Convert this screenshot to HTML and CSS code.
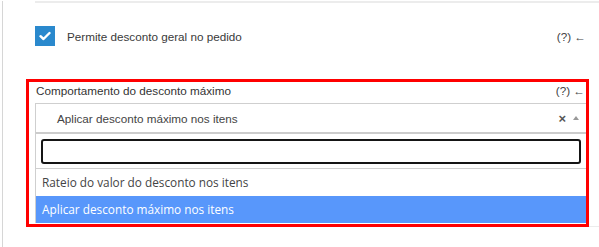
FILE: index.html
```html
<!DOCTYPE html>
<html lang="pt">
<head>
<meta charset="utf-8">
<link rel="stylesheet" href="styles.css">
</head>
<body>
<div class="page">
  <div class="content">
    <div class="check-row">
      <span class="checkbox">
        <svg width="12" height="10" viewBox="0 0 12 10"><path d="M1.5 5.2 L4.5 8 L10.5 2" fill="none" stroke="#fff" stroke-width="2.4" stroke-linecap="round" stroke-linejoin="round"/></svg>
      </span>
      <span class="check-label">Permite desconto geral no pedido</span>
      <span class="help">(?) ←</span>
    </div>
    <div class="field">
      <div class="field-head">
        <span class="field-label">Comportamento do desconto máximo</span>
        <span class="help">(?) ←</span>
      </div>
      <div class="select">
        <span class="select-value">Aplicar desconto máximo nos itens</span>
        <span class="select-clear">×</span>
        <span class="select-arrow"></span>
      </div>
      <div class="dropdown">
        <div class="search-box"><div class="search-input"></div></div>
        <ul class="options">
          <li class="option">Rateio do valor do desconto nos itens</li>
          <li class="option option-active">Aplicar desconto máximo nos itens</li>
        </ul>
      </div>
    </div>
  </div>
</div>
</body>
</html>
```
FILE: styles.css
```css
html, body {
  margin: 0;
  padding: 0;
  background: #fff;
}
body {
  font-family: "Liberation Sans", Arial, sans-serif;
  font-size: 11.7px;
  color: #333;
}
.page {
  margin-left: 2px;
  border-left: 1px solid #d6d6d6;
  height: 247px;
  box-sizing: border-box;
}
.content {
  margin-left: 32px;
  margin-top: 1px;
  border-top: 2px solid #ececec;
  height: 223px;
  border-bottom: 1px solid #ececec;
}
.check-row {
  display: flex;
  align-items: center;
  height: 20px;
  margin-top: 23px;
  padding-right: 13px;
}
.checkbox {
  width: 20px;
  height: 20px;
  background: #2a89cd;
  display: flex;
  align-items: center;
  justify-content: center;
}
.check-label {
  margin-left: 12px;
  flex: 1;
  color: #3a3a3a;
}
.help {
  color: #444;
}
.field {
  margin-top: 33px;
  margin-left: -9px;
  width: 563px;
  height: 148px;
  box-sizing: border-box;
  border: 3px solid #ff0000;
  background: #fff;
}
.field-head {
  display: flex;
  height: 21px;
  line-height: 15px;
  padding: 1px 1px 0 7px;
  box-sizing: border-box;
}
.field-label {
  flex: 1;
  color: #333;
}
.select {
  margin-left: 6px;
  height: 28px;
  border-top: 1px solid #cfcfcf;
  border-left: 1px solid #cfcfcf;
  display: flex;
  align-items: center;
  padding-left: 21px;
  padding-right: 6px;
}
.select-value {
  flex: 1;
  color: #444;
}
.select-clear {
  font-weight: bold;
  font-size: 13px;
  color: #555;
  margin-right: 7px;
}
.select-arrow {
  width: 0;
  height: 0;
  border-left: 3.5px solid transparent;
  border-right: 3.5px solid transparent;
  border-bottom: 4px solid #999;
  margin-right: 1px;
}
.dropdown {
  margin-left: 6px;
  border-top: 2px solid #cccccc;
  border-left: 1px solid #cfcfcf;
}
.search-box {
  padding: 5px 5px 4px 5px;
  border-bottom: 1px solid #cfcfcf;
}
.search-input {
  height: 25px;
  box-sizing: border-box;
  border: 2px solid #151515;
  border-radius: 3px;
}
.options {
  list-style: none;
  margin: 0;
  padding: 0;
  font-family: "Open Sans", "Noto Sans", sans-serif;
  font-size: 11.8px;
}
.option {
  height: 27px;
  line-height: 27px;
  padding-left: 6px;
  color: #444;
}
.option-active {
  background: #5897fb;
  color: #fff;
}
```
